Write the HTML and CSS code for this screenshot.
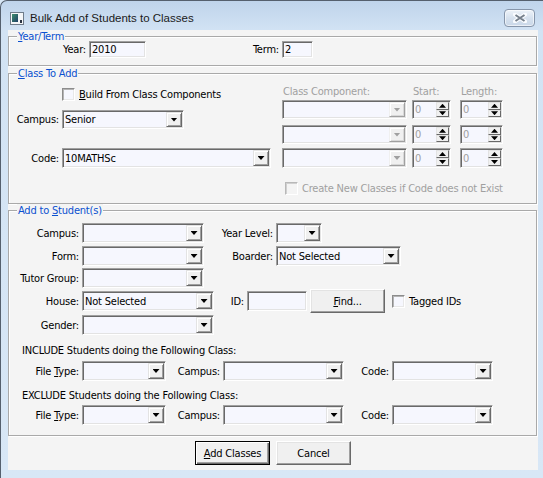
FILE: index.html
```html
<!DOCTYPE html>
<html>
<head>
<meta charset="utf-8">
<link rel="stylesheet" href="styles.css">
</head>
<body>
<div class="window">
  <div class="titlebar">
    <svg class="appicon" width="14" height="13" viewBox="0 0 14 13">
      <defs>
        <linearGradient id="ig" x1="0" y1="0" x2="1" y2="1">
          <stop offset="0" stop-color="#3f8f6f"/>
          <stop offset="1" stop-color="#1d3f66"/>
        </linearGradient>
      </defs>
      <rect x="0.5" y="0.5" width="13" height="12" fill="#f4f6f8" stroke="#6f7c8a"/>
      <rect x="2" y="2" width="6" height="8" fill="url(#ig)"/>
      <rect x="10" y="8" width="2" height="3" fill="#2a3340"/>
    </svg>
    <span class="title">Bulk Add of Students to Classes</span>
    <div class="close">
      <svg width="14" height="10" viewBox="0 0 14 10">
        <path d="M2 1.5 L12 8.5 M12 1.5 L2 8.5" stroke="#fafcff" stroke-width="4" stroke-linecap="round"/>
        <path d="M2.5 2 L11.5 8 M11.5 2 L2.5 8" stroke="#76808c" stroke-width="2"/>
      </svg>
    </div>
  </div>

  <div class="client">
    <div class="group g-year">
      <span class="legend"><u>Y</u>ear/Term</span>
      <div class="row h17">
        <span class="lbl lbl-year">Year:</span>
        <div class="edit w57">2010</div>
        <span class="lbl lbl-term">Term:</span>
        <div class="edit w31">2</div>
      </div>
    </div>

    <div class="group g-class">
      <span class="legend"><u>C</u>lass To Add</span>
      <div class="col-left">
        <div class="chkrow build"><span class="chk"></span><span><u>B</u>uild From Class Components</span></div>
        <div class="row h19 r-campus">
          <span class="lbl lbl-c">Campus:</span>
          <div class="combo w122"><span class="val">Senior</span><span class="dd"></span></div>
        </div>
        <div class="row h20 r-code">
          <span class="lbl lbl-c">Code:</span>
          <div class="combo w209"><span class="val">10MATHSc</span><span class="dd"></span></div>
        </div>
      </div>
      <div class="col-right">
        <div class="comp-head">
          <span class="h-comp">Class Component:</span>
          <span class="h-start">Start:</span>
          <span class="h-len">Length:</span>
        </div>
        <div class="comp-row h19 first">
          <div class="combo disabled w125"><span class="val"></span><span class="dd"></span></div>
          <div class="spin w39"><span class="val">0</span><span class="ud"><span class="ub up"></span><span class="ub down"></span></span></div>
          <div class="spin w43"><span class="val">0</span><span class="ud"><span class="ub up"></span><span class="ub down"></span></span></div>
        </div>
        <div class="comp-row h19 second">
          <div class="combo disabled w125"><span class="val"></span><span class="dd"></span></div>
          <div class="spin w39"><span class="val">0</span><span class="ud"><span class="ub up"></span><span class="ub down"></span></span></div>
          <div class="spin w43"><span class="val">0</span><span class="ud"><span class="ub up"></span><span class="ub down"></span></span></div>
        </div>
        <div class="comp-row h20 third">
          <div class="combo disabled w125"><span class="val"></span><span class="dd"></span></div>
          <div class="spin w39"><span class="val">0</span><span class="ud"><span class="ub up"></span><span class="ub down"></span></span></div>
          <div class="spin w43"><span class="val">0</span><span class="ud"><span class="ub up"></span><span class="ub down"></span></span></div>
        </div>
        <div class="chkrow create disabled"><span class="chk"></span><span>Create New Classes if Code does not Exist</span></div>
      </div>
    </div>

    <div class="group g-stud">
      <span class="legend">Add to <u>S</u>tudent(s)</span>
      <div class="row h20 s1">
        <span class="lbl lbl-s">Campus:</span>
        <div class="combo w122"><span class="val"></span><span class="dd"></span></div>
        <span class="lbl lbl-s2">Year Level:</span>
        <div class="combo w46"><span class="val"></span><span class="dd"></span></div>
      </div>
      <div class="row h20 s2">
        <span class="lbl lbl-s">Form:</span>
        <div class="combo w122"><span class="val"></span><span class="dd"></span></div>
        <span class="lbl lbl-s2">Boarder:</span>
        <div class="combo w125"><span class="val">Not Selected</span><span class="dd"></span></div>
      </div>
      <div class="row h20 s3">
        <span class="lbl lbl-s">Tutor Group:</span>
        <div class="combo w122"><span class="val"></span><span class="dd"></span></div>
      </div>
      <div class="row h24 s4">
        <span class="lbl lbl-s">House:</span>
        <div class="combo w132 h20"><span class="val">Not Selected</span><span class="dd"></span></div>
        <span class="lbl lbl-id">ID:</span>
        <div class="edit w60 h20"></div>
        <div class="btn find"><span><u>F</u>ind...</span></div>
        <span class="chk tagged"></span>
        <span class="tagtext">Tagged IDs</span>
      </div>
      <div class="row h20 s5">
        <span class="lbl lbl-s">Gender:</span>
        <div class="combo w132"><span class="val"></span><span class="dd"></span></div>
      </div>
      <div class="note inc">INCLUDE Students doing the Following Class:</div>
      <div class="row h20 s6">
        <span class="lbl lbl-s">File <u>T</u>ype:</span>
        <div class="combo w84"><span class="val"></span><span class="dd"></span></div>
        <span class="lbl lbl-fc">Campus:</span>
        <div class="combo w121"><span class="val"></span><span class="dd"></span></div>
        <span class="lbl lbl-code">Code:</span>
        <div class="combo w101"><span class="val"></span><span class="dd"></span></div>
      </div>
      <div class="note exc">EXCLUDE Students doing the Following Class:</div>
      <div class="row h20 s7">
        <span class="lbl lbl-s">File <u>T</u>ype:</span>
        <div class="combo w84"><span class="val"></span><span class="dd"></span></div>
        <span class="lbl lbl-fc">Campus:</span>
        <div class="combo w121"><span class="val"></span><span class="dd"></span></div>
        <span class="lbl lbl-code">Code:</span>
        <div class="combo w101"><span class="val"></span><span class="dd"></span></div>
      </div>
    </div>

    <div class="buttons">
      <div class="btn default"><span><u>A</u>dd Classes</span></div>
      <div class="btn"><span>Cancel</span></div>
    </div>
  </div>
</div>
</body>
</html>
```

FILE: styles.css
```css
* { box-sizing: border-box; }

html, body {
  margin: 0;
  padding: 0;
}

body {
  width: 543px;
  height: 478px;
  overflow: hidden;
  background: #d8e7f6;
  font-family: "DejaVu Sans Condensed", "DejaVu Sans", sans-serif;
  font-size: 11px;
  letter-spacing: -0.2px;
  color: #000;
}

u { text-decoration: underline; text-underline-offset: 1px; }

.window {
  width: 543px;
  height: 478px;
  border-top: 1px solid #55606e;
  border-left: 1px solid #55606e;
  border-top-left-radius: 7px;
  background: linear-gradient(#bfd4eb, #d2e3f4 30px, #d8e7f6);
}

.titlebar {
  height: 29px;
  padding: 5px 0 0 9px;
  display: flex;
  align-items: center;
}

.appicon { flex: none; }

.title {
  margin-left: 6px;
  font-family: "Liberation Sans", Arial, sans-serif;
  font-size: 11.5px;
  letter-spacing: 0;
  color: #1a1a1a;
}

.close {
  margin-left: auto;
  margin-right: 8px;
  width: 31px;
  height: 18px;
  border: 1px solid #8695aa;
  border-radius: 4px;
  background: linear-gradient(#eef3f9, #d6e1ee 50%, #c9d7e8);
  box-shadow: inset 0 0 0 1px rgba(255,255,255,0.6);
  display: flex;
  align-items: center;
  justify-content: center;
}

.client {
  margin-left: 7px;
  width: 530px;
  height: 440px;
  background: #f4f4f4;
  display: flex;
  flex-direction: column;
}

/* group boxes */
.group {
  position: relative;
  width: 529px;
  border: 1px solid #a9a9a9;
  box-shadow: inset 1px 1px 0 #fff, 1px 1px 0 #fff;
  flex: none;
}

.legend {
  position: absolute;
  top: -7px;
  left: 8px;
  padding: 0 1px;
  line-height: 13px;
  background: #f4f4f4;
  color: #0a50d0;
}

.g-year {
  margin-top: 6px;
  height: 30px;
  padding-top: 4px;
}

.g-class {
  margin-top: 7px;
  height: 131px;
  display: flex;
}

.g-stud {
  margin-top: 6px;
  height: 226px;
  display: flex;
  flex-direction: column;
}

/* rows */
.row {
  display: flex;
  align-items: center;
  flex: none;
}

.h17 { height: 17px; }
.h19 { height: 19px; }
.h20 { height: 20px; }
.h24 { height: 24px; }

.lbl {
  flex: none;
  text-align: right;
  margin-right: 3px;
  white-space: nowrap;
}

.lbl-year { width: 77px; }
.lbl-term { width: 133px; }
.lbl-c { width: 50px; }
.lbl-s { width: 70px; }
.lbl-s2 { width: 69px; }
.lbl-id { width: 30px; }
.lbl-fc { width: 54px; }
.lbl-code { width: 45px; }

.w31 { width: 31px; }
.w39 { width: 39px; }
.w43 { width: 43px; }
.w46 { width: 46px; }
.w57 { width: 57px; }
.w60 { width: 60px; }
.w84 { width: 84px; }
.w101 { width: 101px; }
.w121 { width: 121px; }
.w122 { width: 122px; }
.w125 { width: 125px; }
.w132 { width: 132px; }
.w209 { width: 209px; }

/* sunken fields */
.edit, .combo, .spin {
  flex: none;
  height: 100%;
  background: #f6f7fe;
  border: 1px solid;
  border-color: #a0a0a0 #ffffff #ffffff #a0a0a0;
  box-shadow: inset 1px 1px 0 #696969, inset -1px -1px 0 #e3e3e3;
  padding: 1px;
  white-space: nowrap;
}

.edit {
  display: flex;
  align-items: center;
  padding-left: 2px;
}

.combo, .spin {
  display: flex;
}

.val {
  flex: 1;
  display: flex;
  align-items: center;
  padding-left: 1px;
  overflow: hidden;
}

.dd {
  flex: none;
  width: 16px;
  background: #f0f0f0;
  border: 1px solid;
  border-color: #e3e3e3 #696969 #696969 #e3e3e3;
  box-shadow: inset 1px 1px 0 #fff, inset -1px -1px 0 #a0a0a0;
  display: flex;
  align-items: center;
  justify-content: center;
}

.dd::after {
  content: "";
  width: 7px;
  height: 4px;
  background: #000;
  clip-path: polygon(0 0, 100% 0, 50% 100%);
}

.combo.disabled .dd::after { background: #a0a0a0; }
.combo.disabled .dd {
  border-color: #f0f0f0 #a0a0a0 #a0a0a0 #f0f0f0;
  box-shadow: inset 1px 1px 0 #fff, inset -1px -1px 0 #d8d8d8;
}

.spin .val { color: #a0a0a0; }

.ud {
  flex: none;
  width: 13px;
  display: flex;
  flex-direction: column;
}

.ub {
  flex: 1;
  background: #f0f0f0;
  border: 1px solid;
  border-color: #e3e3e3 #696969 #696969 #e3e3e3;
  display: flex;
  align-items: center;
  justify-content: center;
}

.ub::after {
  content: "";
  width: 7px;
  height: 4px;
  background: #000;
}

.ub.up::after { clip-path: polygon(50% 0, 100% 100%, 0 100%); }
.ub.down::after { clip-path: polygon(0 0, 100% 0, 50% 100%); }

/* checkboxes */
.chkrow {
  display: flex;
  align-items: center;
  height: 13px;
  flex: none;
}

.chk {
  flex: none;
  width: 13px;
  height: 13px;
  background: #f6f7fe;
  border: 1px solid;
  border-color: #8c8c8c #ffffff #ffffff #8c8c8c;
  box-shadow: inset 1px 1px 0 #b4b4b4, inset -1px -1px 0 #e8e8e8;
  margin-right: 4px;
}

.chkrow.disabled { color: #a0a0a0; }
.chkrow.disabled .chk {
  background: #f4f4f4;
  border-color: #b8b8b8 #ffffff #ffffff #b8b8b8;
  box-shadow: inset 1px 1px 0 #d0d0d0;
}

/* Class To Add */
.col-left {
  width: 273px;
  flex: none;
  display: flex;
  flex-direction: column;
}

.build { margin-top: 14px; padding-left: 53px; }
.r-campus { margin-top: 9px; }
.r-code { margin-top: 19px; }

.col-right {
  flex: 1;
  display: flex;
  flex-direction: column;
}

.comp-head {
  margin-top: 11px;
  height: 13px;
  display: flex;
  color: #a0a0a0;
  line-height: 13px;
}

.h-comp { width: 130px; padding-left: 1px; }
.h-start { width: 48px; padding-left: 1px; }
.h-len { padding-left: 1px; }

.comp-row {
  display: flex;
  flex: none;
}

.comp-row .combo { margin-right: 5px; }
.comp-row .spin.w39 { margin-right: 9px; }

.comp-row.first { margin-top: 2px; }
.comp-row.second { margin-top: 6px; }
.comp-row.third { margin-top: 4px; }

.create { margin-top: 14px; padding-left: 3px; }

/* Add to Students */
.s1 { margin-top: 12px; }
.s2 { margin-top: 3px; }
.s3 { margin-top: 2px; }
.s4 { margin-top: 1px; }
.s5 { margin-top: 2px; }
.s6 { margin-top: 4px; }
.s7 { margin-top: 3px; }

.s4 .combo, .s4 .edit { height: 20px; }

.note {
  flex: none;
  height: 13px;
  line-height: 13px;
  padding-left: 13px;
}

.note.inc { margin-top: 9px; }
.note.exc { margin-top: 8px; }

.find {
  width: 60px;
  height: 24px;
  margin-left: 3px;
}

.tagged { margin-left: 7px; margin-right: 4px; }

/* buttons */
.btn {
  flex: none;
  width: 75px;
  height: 24px;
  background: #f0f0f0;
  border: 1px solid;
  border-color: #ffffff #696969 #696969 #ffffff;
  box-shadow: inset -1px -1px 0 #a0a0a0, inset 1px 1px 0 #e3e3e3;
  display: flex;
  align-items: center;
  justify-content: center;
  white-space: nowrap;
}

.btn.default {
  border: 1px solid #000;
  box-shadow: inset 1px 1px 0 #fff, inset -1px -1px 0 #696969, inset -2px -2px 0 #a0a0a0;
}

.buttons {
  margin-top: 5px;
  display: flex;
  justify-content: center;
  gap: 6px;
  flex: none;
}
```
